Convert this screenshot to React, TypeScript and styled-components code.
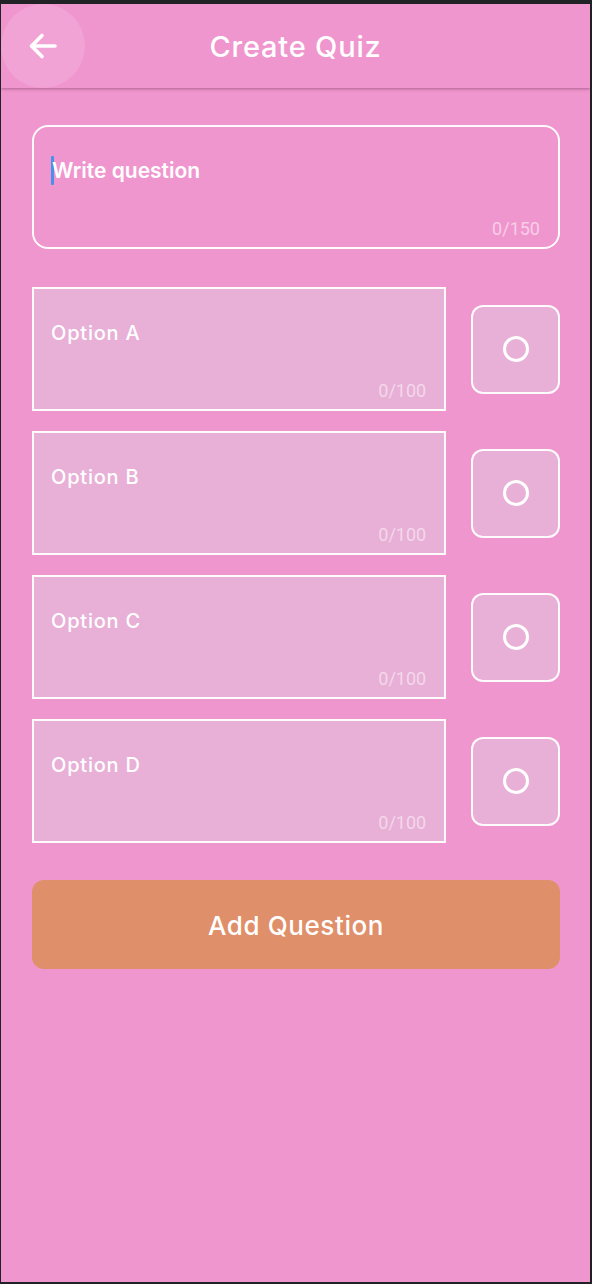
import React from "react";
import styled, { createGlobalStyle } from "styled-components";

const Global = createGlobalStyle`
  html, body { margin: 0; padding: 0; background: #202226; }
  * { box-sizing: border-box; }
`;

const Frame = styled.div`
  width: 592px;
  height: 1284px;
  border-style: solid;
  border-color: #202226;
  border-width: 4px 2px 2px 1px;
  background: #f096ce;
  font-family: "Inter", "Lato", sans-serif;
  display: flex;
  flex-direction: column;
  overflow: hidden;
`;

const Header = styled.header`
  position: relative;
  height: 84px;
  flex: none;
  display: flex;
  align-items: center;
  justify-content: center;
  background: #f096ce;
  box-shadow: 0 1px 3px rgba(90, 30, 70, 0.45);
  z-index: 1;
`;

const BackButton = styled.button`
  position: absolute;
  left: 0;
  top: 0;
  width: 84px;
  height: 84px;
  border: none;
  border-radius: 50%;
  background: #f2a3d5;
  display: flex;
  align-items: center;
  justify-content: center;
  padding: 0;
  cursor: pointer;
`;

const Title = styled.h1`
  margin: 1px 0 0 0;
  color: #fff;
  font-size: 29px;
  font-weight: 500;
  letter-spacing: 0.8px;
`;

const Content = styled.main`
  display: flex;
  flex-direction: column;
  padding: 37px 30px 0 31px;
`;

const QuestionBox = styled.div`
  position: relative;
  height: 124px;
  border: 2px solid rgba(255, 255, 255, 0.95);
  border-radius: 16px;
  padding: 29px 17px 0 17px;
  display: flex;
  align-items: flex-start;
`;

const Cursor = styled.span`
  display: inline-block;
  width: 3px;
  height: 29px;
  background: #4a8fe8;
  border-radius: 1px;
`;

const QuestionText = styled.span`
  color: #fff;
  font-size: 21px;
  font-weight: 600;
  line-height: 29px;
  margin-left: -2px;
`;

const Counter = styled.span<{ $tone: string }>`
  position: absolute;
  right: 18px;
  bottom: 8px;
  font-family: "Roboto", sans-serif;
  font-size: 18px;
  color: ${(p) => p.$tone};
`;

const Options = styled.div`
  display: flex;
  flex-direction: column;
  gap: 20px;
  margin-top: 38px;
`;

const OptionRow = styled.div`
  display: flex;
  align-items: center;
  gap: 25px;
`;

const OptionField = styled.div`
  position: relative;
  width: 415px;
  height: 124px;
  border: 2px solid rgba(255, 255, 255, 0.95);
  background: #e8b0d7;
  padding: 29px 17px 0 17px;
`;

const OptionLabel = styled.span`
  color: #fff;
  font-size: 20px;
  font-weight: 500;
  line-height: 30px;
  letter-spacing: 0.8px;
`;

const RadioBox = styled.button`
  width: 89px;
  height: 89px;
  border: 2px solid rgba(255, 255, 255, 0.95);
  border-radius: 12px;
  background: #e8b0d7;
  display: flex;
  align-items: center;
  justify-content: center;
  padding: 0;
  cursor: pointer;
`;

const AddButton = styled.button`
  margin-top: 37px;
  height: 89px;
  border: none;
  border-radius: 12px;
  background: #df8f69;
  color: #fff;
  font-family: "Inter", "Lato", sans-serif;
  font-size: 26px;
  font-weight: 500;
  letter-spacing: 0.6px;
  padding-top: 2px;
  cursor: pointer;
`;

const ArrowIcon = () => (
  <svg width="36" height="36" viewBox="0 0 36 36" fill="none">
    <path
      d="M30 18H7M17 7.5L6.5 18L17 28.5"
      stroke="#fff"
      strokeWidth="3.6"
      strokeLinecap="round"
      strokeLinejoin="round"
    />
  </svg>
);

const RadioIcon = () => (
  <svg width="30" height="30" viewBox="0 0 30 30" fill="none">
    <circle cx="15" cy="15" r="11.5" stroke="#fff" strokeWidth="3" />
  </svg>
);

const options = ["Option A", "Option B", "Option C", "Option D"];

export default function App() {
  return (
    <>
      <Global />
      <Frame>
        <Header>
          <BackButton aria-label="Back">
            <ArrowIcon />
          </BackButton>
          <Title>Create Quiz</Title>
        </Header>
        <Content>
          <QuestionBox>
            <Cursor />
            <QuestionText>Write question</QuestionText>
            <Counter $tone="rgba(255,255,255,0.55)">0/150</Counter>
          </QuestionBox>
          <Options>
            {options.map((o) => (
              <OptionRow key={o}>
                <OptionField>
                  <OptionLabel>{o}</OptionLabel>
                  <Counter $tone="rgba(255,255,255,0.5)">0/100</Counter>
                </OptionField>
                <RadioBox aria-label={`Select ${o}`}>
                  <RadioIcon />
                </RadioBox>
              </OptionRow>
            ))}
          </Options>
          <AddButton>Add Question</AddButton>
        </Content>
      </Frame>
    </>
  );
}
